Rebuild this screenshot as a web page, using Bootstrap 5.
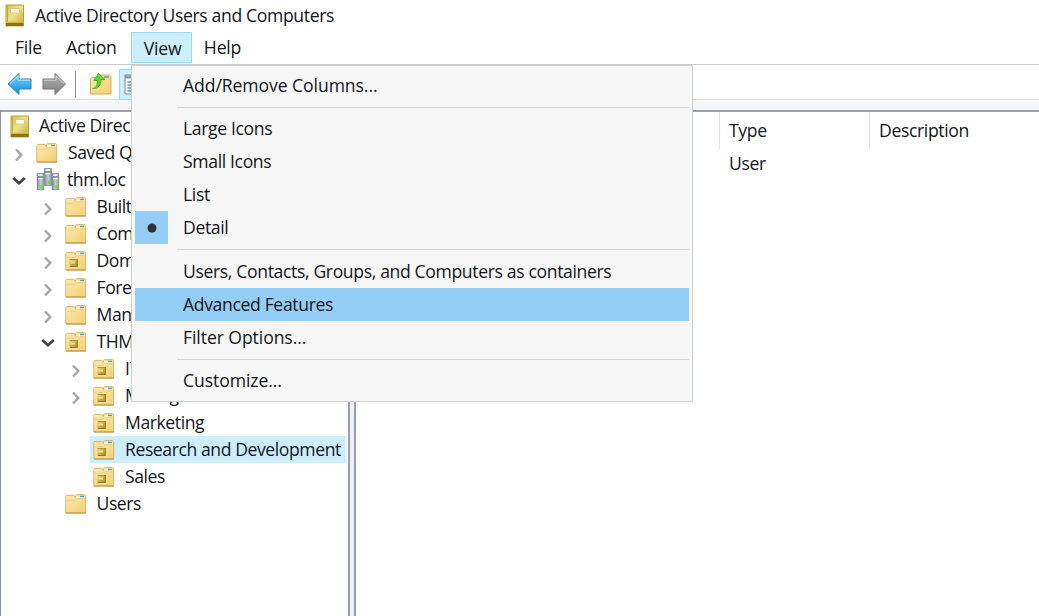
<!DOCTYPE html>
<html lang="en">
<head>
<meta charset="utf-8">
<title>Active Directory Users and Computers</title>
<link rel="stylesheet" href="https://cdn.jsdelivr.net/npm/bootstrap@5.3.0/dist/css/bootstrap.min.css">
<style>
body{font:17.6px/27px "Open Sans","Noto Sans",sans-serif;font-stretch:92%;letter-spacing:-.36px;color:#141420;background:#fff;height:616px}
.titlebar{height:30px;margin-bottom:1px;padding-left:5px}
.titlebar svg{margin-right:10px}
.menubar{height:34px;border-bottom:1px solid #c9cccc;padding-left:5px;letter-spacing:-.2px}
.menubar .entry{height:31px;margin-top:1px;line-height:31px;text-align:center}
.menubar .open{background:#cceeff;border:1px solid #99d9ff;line-height:31px}
.tools{height:35px;border-bottom:1px solid #dfe1e1;padding:4px 0 0 7px;background:#fff}
.tools .rule{width:1px;height:27px;margin:0 18px 0 10px;background:#929292}
.tools .pressed{width:34px;height:31px;background:#cceeff;border:1px solid #99d9ff}
.panes{background:#f0f0f2;border-top:10px solid #f5f6f6}
.tree{width:350px;border:2px solid #9b9eaa;border-bottom:0;border-left:1px solid #8e919f;background:#fff;letter-spacing:-.42px}
.details{margin-left:4px;border:2px solid #9b9eaa;border-right:0;border-bottom:0;background:#fff}
.node{height:27px;padding-left:9px}
.node .arrow{width:28px}
.node .caption{padding:0 5px 0 3px;height:27px}
.node .caption svg{margin-right:10px;flex:none}
.node.l1{padding-left:3px}.node.l2{padding-left:31.5px}.node.l3{padding-left:60px}
.node.l1,.node.l2,.node.l3{padding-left:calc(var(--x) + 0px)}
.node.l1{--x:4px}.node.l2{--x:32.5px}.node.l3{--x:61px}
.picked{background:#cceeff}
.cols{height:37px}
.cols div{border-right:1px solid #e3e3e3;padding:5px 0 0 9px}
.c1{width:364px}.c2{width:150px}
.popup{left:131px;top:65px;width:562px;height:337px;padding-top:3px;background:#f6f6f6;border:1px solid #cdd2d2;z-index:5}
.popup .choice{height:33px;line-height:32px;margin:0 3px}
.popup .wider{letter-spacing:-.08px}
.popup .tick{width:33px;height:33px;margin-right:15px}
.popup .on,.popup .chosen{background:#94cdf5}
.popup .gap{height:10.4px;margin:0 3px 0 45px;padding-top:5px}
.popup .gap div{height:1px;background:#d5d5d5}
</style>
<script src="https://cdn.jsdelivr.net/npm/bootstrap@5.3.0/dist/js/bootstrap.bundle.min.js"></script>
</head>
<body class="d-flex flex-column overflow-hidden position-relative text-nowrap">
<svg width="0" height="0" class="position-absolute">
<defs>
<linearGradient id="gold" x2="1" y2="1"><stop stop-color="#ffeab0"/><stop offset="1" stop-color="#f3cf72"/></linearGradient>
<linearGradient id="bronze" x2="1" y2="1"><stop stop-color="#ecd679"/><stop offset="1" stop-color="#a8861f"/></linearGradient>
<linearGradient id="bookfill" x2="1" y2="1"><stop stop-color="#d3bb45"/><stop offset=".45" stop-color="#efe28e"/><stop offset="1" stop-color="#c5aa2c"/></linearGradient>
<linearGradient id="blue" x2="0" y2="1"><stop stop-color="#8bd5f7"/><stop offset=".6" stop-color="#36adec"/><stop offset="1" stop-color="#1685cb"/></linearGradient>
<linearGradient id="grey" x2="0" y2="1"><stop stop-color="#b4b4b4"/><stop offset="1" stop-color="#7c7c7c"/></linearGradient>
<linearGradient id="steel" x2="1"><stop stop-color="#7d8c93"/><stop offset=".5" stop-color="#c0ccd1"/><stop offset="1" stop-color="#8e9da4"/></linearGradient>
<symbol id="book" viewBox="0 0 20 23"><path d="M1 1h17.500v21H1z" fill="url(#bookfill)" stroke="#b8a240"/><path d="M1 18.500h17.500V22H1z" fill="#8e7516"/><path d="M1 18h17.500" stroke="#ddc85a"/><path d="M2.500 2v16" stroke="#c0a838"/><path d="M5.500 4.500h9v4.500h-9z" fill="#fffdf0" stroke="#dccb70"/></symbol>
<symbol id="folder" viewBox="0 0 22 20"><path d="M.8 2.200 1.600 1.400h7.200l1.700 2.400V1.600l1-1h8l1.200 1V19H.8z" fill="url(#gold)" stroke="#d8b76e"/><path d="M11.300 2.200h8v2.400h-9z" fill="#fff4cf"/><path d="M15 2.500h4" stroke="#48a1d8" stroke-width="1.500"/><path d="M1.800 6.300h7.500l1.800-1.600h9" fill="none" stroke="#ecd08c"/><path d="M1 19h20" stroke="#b98f43"/></symbol>
<symbol id="unit" viewBox="0 0 22 20"><use href="#folder"/><path d="M4.500 8h8v8h-8z" fill="url(#bronze)"/><path d="M4.500 8.500h7.800" stroke="#b39434"/><path d="M5 15.500h7.300V8" fill="none" stroke="#97791c"/><path d="M5.500 10.500h4.500v2H5.500z" fill="#f5e08f"/></symbol>
<symbol id="server" viewBox="0 0 8 16" preserveAspectRatio="none"><path d="M.5.500h7v15h-7z" fill="url(#steel)" stroke="#7c8b92" stroke-width=".8"/><path d="M1.500 2h4.500M1.500 5h4.500" stroke="#fff" stroke-width="1.200"/><path d="M1.500 3.500h5" stroke="#506770" stroke-width=".8"/><path d="M4 11.500h3v2.700H4z" fill="#61e51f"/></symbol>
<symbol id="domain" viewBox="0 0 24 23"><use href="#server" x="8" y="0" width="8" height="18"/><use href="#server" x="0.500" y="5" width="8" height="17.500"/><use href="#server" x="15.500" y="5" width="8" height="17.500"/></symbol>
<symbol id="closed" viewBox="0 0 10 14"><path d="m2 1.500 5.300 5.500L2 12.500" fill="none" stroke="#a6a6a6" stroke-width="2.400"/></symbol>
<symbol id="opened" viewBox="0 0 14 10"><path d="m1.200 2 5.800 5.300L12.800 2" fill="none" stroke="#404040" stroke-width="2.600"/></symbol>
</defs>
</svg>

<header class="titlebar d-flex align-items-center flex-shrink-0"><svg width="20" height="23"><use href="#book"/></svg><span>Active Directory Users and Computers</span></header>

<nav class="menubar d-flex flex-shrink-0">
<div class="entry" style="width:47px">File</div><div class="entry" style="width:79px">Action</div><div class="entry open" style="width:61px;padding-left:2px">View</div><div class="entry" style="width:61px">Help</div>
</nav>

<div class="tools d-flex align-items-center flex-shrink-0">
<svg width="25" height="24" viewBox="0 0 25 24"><path d="M1 12 12 1.500V7h12v10H12v5.500z" fill="url(#blue)" stroke="#3682af" stroke-linejoin="round"/><path d="m3 11.500 8-7.500v4.200h12" fill="none" stroke="#b3e6fb"/></svg>
<svg width="25" height="24" viewBox="0 0 25 24" style="margin-left:9px"><path d="M24.500 12 14 1.500V7H2v10h12v5.500z" fill="url(#grey)" stroke="#757575" stroke-linejoin="round"/><path d="M3 8.200h12V4l8 7.500" fill="none" stroke="#cfcfcf"/></svg>
<div class="rule" style="margin-left:9px;margin-right:13px"></div>
<svg width="24" height="24" viewBox="0 0 24 24" style="margin-right:6px"><path d="M1.500 7 3 5.500h6.500V3h11l1.500 1.500V22H1.500z" fill="url(#gold)" stroke="#d0aa58"/><path d="M15 5h5" stroke="#48a1d8" stroke-width="1.500"/><path d="M3.500 16.500c4-.5 5-3.500 5-8H4.800L9.500 1.500l6.500 6H12C12.500 13 9 17 3.500 16.500z" fill="#5ad72b" stroke="#48b52e"/></svg>
<div class="pressed d-flex align-items-center ps-1"><svg width="22" height="21" viewBox="0 0 22 21"><path d="M1 1h20v19H1z" fill="#fff" stroke="#7b8790"/><path d="M1 3h20" stroke="#8b98a2" stroke-width="3"/><path d="M3.500 8h5M3.500 11h5M3.500 14h5M3.500 17h5" stroke="#5d91bd" stroke-width="1.300"/></svg></div>
</div>

<main class="panes d-flex flex-grow-1">
<aside class="tree flex-shrink-0 overflow-hidden">
<div class="node d-flex"><svg width="20" height="23" class="flex-shrink-0" style="margin:3px 9px 0 0"><use href="#book"/></svg>Active Direc</div>
<div id="nodes"></div>
</aside>
<section class="details flex-grow-1">
<div class="cols d-flex"><div class="c1"></div><div class="c2">Type</div><span style="padding:5px 0 0 9px">Description</span></div>
<div class="d-flex" style="padding-top:1px"><div class="c1"></div><div style="padding-left:9px">User</div></div>
</section>
</main>

<div class="popup position-absolute" id="popup"></div>

<script>
const nodes=[
 [1,'closed','folder','Saved Q'],[1,'opened','domain','thm.loc'],
 [2,'closed','folder','Built'],[2,'closed','folder','Com'],[2,'closed','unit','Dom'],
 [2,'closed','folder','Fore'],[2,'closed','folder','Man'],[2,'opened','unit','THM'],
 [3,'closed','unit','IT'],[3,'closed','unit','Manag'],[3,'','unit','Marketing'],[3,'','unit','Research and Development',true],
 [3,'','unit','Sales'],[2,'','folder','Users']];
const arrows={closed:'<svg width="10" height="14" style="margin:4px 0 0 9px"><use href="#closed"/></svg>',opened:'<svg width="14" height="10" style="margin:3px 0 0 7px"><use href="#opened"/></svg>','':''};
document.getElementById('nodes').innerHTML=nodes.map(([level,arrow,icon,text,picked])=>{
 const d=icon==='domain';
 return `<div class="node d-flex l${level}"><div class="arrow d-flex align-items-center flex-shrink-0">${arrows[arrow]}</div><div class="caption d-flex align-items-center ${picked?'picked':''}"><svg width="${d?24:22}" height="${d?23:20}" ${d?'style="margin-right:7px"':''}><use href="#${icon}"/></svg>${text}</div></div>`}).join('');
const items=['Add/Remove Columns...','','Large Icons','Small Icons','List','Detail','','Users, Contacts, Groups, and Computers as containers','Advanced Features','Filter Options...','','Customize...'];
document.getElementById('popup').innerHTML=items.map(t=>!t?'<div class="gap"><div></div></div>':
 `<div class="choice d-flex ${t==='Advanced Features'?'chosen':''} ${t.endsWith('...')?'wider':''}"><div class="tick d-flex align-items-center justify-content-center ${t==='Detail'?'on':''}">${t==='Detail'?'<svg width="10" height="10"><circle cx="5" cy="5" r="4.500" fill="#303030"/></svg>':''}</div>${t}</div>`).join('');
</script>
</body>
</html>
